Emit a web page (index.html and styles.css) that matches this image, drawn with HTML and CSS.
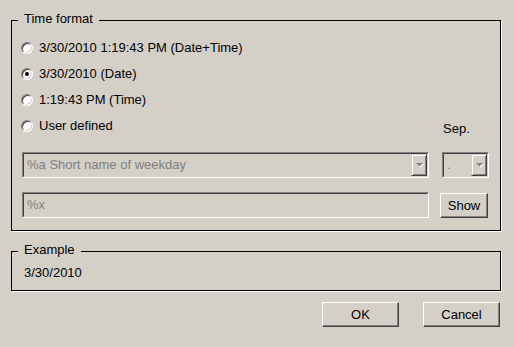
FILE: index.html
```html
<!DOCTYPE html>
<html>
<head>
<meta charset="utf-8">
<link rel="stylesheet" href="styles.css">
</head>
<body>
<div class="dialog">
  <div class="group group-time">
    <span class="group-title">Time format</span>
    <div class="radio-row"><span class="radio"></span><span>3/30/2010 1:19:43 PM (Date+Time)</span></div>
    <div class="radio-row"><span class="radio checked"></span><span>3/30/2010 (Date)</span></div>
    <div class="radio-row"><span class="radio"></span><span>1:19:43 PM (Time)</span></div>
    <div class="row-user">
      <div class="radio-row"><span class="radio"></span><span>User defined</span></div>
      <span class="sep-label">Sep.</span>
    </div>
    <div class="ctrl-row ctrl-row-combo">
      <div class="combo combo-wide">
        <div class="combo-in">
          <span class="combo-text">%a Short name of weekday</span>
          <span class="drop-btn"><svg width="8" height="5" viewBox="0 0 8 5"><polygon points="1,1 8,1 4.5,4.5" fill="#fff"/><polygon points="0,0 7,0 3.5,3.5" fill="#808080"/></svg></span>
        </div>
      </div>
      <div class="combo combo-sep">
        <div class="combo-in">
          <span class="combo-text">.</span>
          <span class="drop-btn"><svg width="8" height="5" viewBox="0 0 8 5"><polygon points="1,1 8,1 4.5,4.5" fill="#fff"/><polygon points="0,0 7,0 3.5,3.5" fill="#808080"/></svg></span>
        </div>
      </div>
    </div>
    <div class="ctrl-row ctrl-row-field">
      <div class="field"><div class="field-in">%x</div></div>
      <button class="btn btn-show">Show</button>
    </div>
  </div>

  <div class="group group-example">
    <span class="group-title">Example</span>
    <div class="example-text">3/30/2010</div>
  </div>

  <div class="buttons">
    <button class="btn btn-dlg">OK</button>
    <button class="btn btn-dlg">Cancel</button>
  </div>
</div>
</body>
</html>
```
FILE: styles.css
```css
html, body {
  margin: 0;
  padding: 0;
  background: #d4d0c8;
}
body {
  font-family: "Liberation Sans", Arial, sans-serif;
  font-size: 13px;
  line-height: 16px;
  color: #000;
}
.dialog {
  width: 490px;
  padding: 20px 13px 0 11px;
}
.group {
  position: relative;
  border: 1px solid #000;
  box-shadow: 1px 1px 0 #fff;
}
.group-title {
  position: absolute;
  top: -10px;
  left: 6px;
  padding: 0 6px 0 6px;
  background: #d4d0c8;
  line-height: 16px;
}
.group-time {
  padding: 14px 11px 12px 9px;
}
.radio-row {
  display: flex;
  align-items: center;
  height: 26px;
  line-height: 26px;
}
.radio {
  box-sizing: border-box;
  width: 12px;
  height: 12px;
  margin-right: 6px;
  margin-top: -1px;
  border-radius: 50%;
  border: 1px solid;
  border-color: #808080 #fff #fff #808080;
  background: #fff;
  box-shadow: inset 1px 1px 0 #404040, inset -1px -1px 0 #d4d0c8;
  position: relative;
  flex: none;
}
.radio.checked::after {
  content: "";
  position: absolute;
  left: 3px;
  top: 3px;
  width: 4px;
  height: 4px;
  border-radius: 50%;
  background: #000;
}
.row-user {
  display: flex;
  justify-content: space-between;
  align-items: flex-start;
  height: 26px;
}
.sep-label {
  width: 47px;
  padding-left: 1px;
  box-sizing: border-box;
  line-height: 26px;
  margin-top: 3px;
}
.ctrl-row {
  display: flex;
  justify-content: space-between;
  padding-left: 1px;
}
.ctrl-row-combo {
  margin-top: 13px;
}
.ctrl-row-field {
  margin-top: 14px;
}
.combo, .field {
  box-sizing: border-box;
  height: 26px;
  border: 1px solid;
  border-color: #808080 #fff #fff #808080;
  display: flex;
}
.combo-wide, .field {
  width: 407px;
}
.combo-sep {
  width: 47px;
}
.combo-in, .field-in {
  flex: 1;
  display: flex;
  align-items: center;
  border: 1px solid;
  border-color: #404040 #d4d0c8 #d4d0c8 #404040;
  color: #808080;
}
.field-in {
  padding-left: 3px;
}
.combo-text {
  flex: 1;
  padding-left: 3px;
  white-space: nowrap;
  overflow: hidden;
}
.drop-btn {
  box-sizing: border-box;
  width: 16px;
  height: 100%;
  border: 1px solid;
  border-color: #d4d0c8 #404040 #404040 #d4d0c8;
  box-shadow: inset 1px 1px 0 #fff, inset -1px -1px 0 #808080;
  display: flex;
  align-items: center;
  justify-content: center;
  padding-left: 1px;
  padding-top: 1px;
}
.drop-btn svg {
  display: block;
}
.btn {
  box-sizing: border-box;
  font: inherit;
  color: #000;
  background: #d4d0c8;
  border: 1px solid;
  border-color: #fff #404040 #404040 #fff;
  box-shadow: inset -1px -1px 0 #808080;
  padding: 0;
  margin: 0;
  text-align: center;
}
.btn-show {
  width: 48px;
  height: 25px;
  margin-top: 1px;
  margin-right: 1px;
}
.group-example {
  margin-top: 20px;
  padding: 13px 12px 9px 12px;
}
.example-text {
  line-height: 16px;
}
.buttons {
  display: flex;
  justify-content: flex-end;
  gap: 24px;
  margin-top: 11px;
  padding-right: 1px;
}
.btn-dlg {
  width: 77px;
  height: 25px;
}
```
